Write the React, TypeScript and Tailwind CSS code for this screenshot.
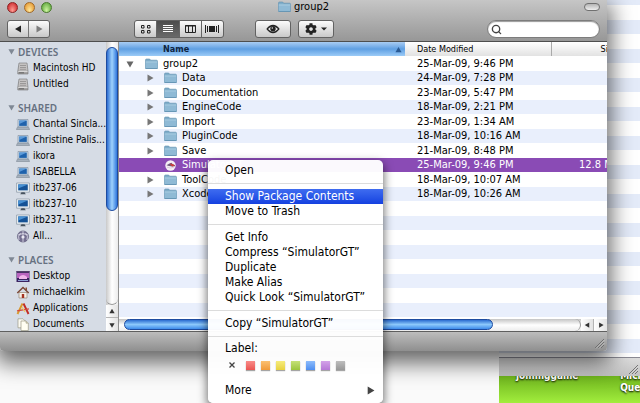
import React from 'react';
import { Search } from 'lucide-react';
import { FaCog } from 'react-icons/fa';

interface FileEntry {
  name: string;
  modified: string;
  size?: string;
  kind: 'root' | 'folder' | 'app';
}

const files: FileEntry[] = [
  { name: 'group2', modified: '25-Mar-09, 9:46 PM', kind: 'root' },
  { name: 'Data', modified: '24-Mar-09, 7:28 PM', kind: 'folder' },
  { name: 'Documentation', modified: '23-Mar-09, 5:47 PM', kind: 'folder' },
  { name: 'EngineCode', modified: '18-Mar-09, 2:21 PM', kind: 'folder' },
  { name: 'Import', modified: '23-Mar-09, 1:34 AM', kind: 'folder' },
  { name: 'PluginCode', modified: '18-Mar-09, 10:16 AM', kind: 'folder' },
  { name: 'Save', modified: '21-Mar-09, 8:48 PM', kind: 'folder' },
  { name: 'SimulatorGT', modified: '25-Mar-09, 9:46 PM', size: '12.8 MB', kind: 'app' },
  { name: 'ToolCode', modified: '18-Mar-09, 10:07 AM', kind: 'folder' },
  { name: 'XcodeProject', modified: '18-Mar-09, 10:26 AM', kind: 'folder' },
];

const emptyRows = [0, 1, 2, 3, 4, 5, 6, 7];

const sections = [
  {
    title: 'DEVICES',
    items: [
      { label: 'Macintosh HD', icon: 'disk' },
      { label: 'Untitled', icon: 'disk' },
    ],
  },
  {
    title: 'SHARED',
    items: [
      { label: 'Chantal Sincla...', icon: 'laptop' },
      { label: 'Christine Palis...', icon: 'laptop' },
      { label: 'ikora', icon: 'laptop' },
      { label: 'ISABELLA', icon: 'laptop' },
      { label: 'itb237-06', icon: 'display' },
      { label: 'itb237-10', icon: 'display' },
      { label: 'itb237-11', icon: 'display' },
      { label: 'All...', icon: 'globe' },
    ],
  },
  {
    title: 'PLACES',
    items: [
      { label: 'Desktop', icon: 'desktop' },
      { label: 'michaelkim', icon: 'home' },
      { label: 'Applications', icon: 'apps' },
      { label: 'Documents', icon: 'docs' },
    ],
  },
];

const menuGroups = [
  ['Open'],
  ['Show Package Contents', 'Move to Trash'],
  ['Get Info', 'Compress “SimulatorGT”', 'Duplicate', 'Make Alias', 'Quick Look “SimulatorGT”'],
  ['Copy “SimulatorGT”'],
];

const labelColors = [
  { name: 'Red', style: 'from-[#f98b88] to-[#ea5552]' },
  { name: 'Orange', style: 'from-[#fbc070] to-[#f09a38]' },
  { name: 'Yellow', style: 'from-[#f6ec7c] to-[#e8d23c]' },
  { name: 'Green', style: 'from-[#c5e176] to-[#9cc53c]' },
  { name: 'Blue', style: 'from-[#8dbcfc] to-[#4f8ff0]' },
  { name: 'Purple', style: 'from-[#d3a2e8] to-[#b678d6]' },
  { name: 'Gray', style: 'from-[#bebebe] to-[#989898]' },
];

const Folder = () => (
  <svg viewBox="0 0 13 12" className="h-3 w-[13px] shrink-0" aria-hidden="true">
    <path d="M.5 10.5V2q0-1 1-1h3.200l1 1.200h5.800q1 0 1 1v7.300z" fill="#7fadc9" stroke="#5f90b0" strokeWidth=".6" />
    <path d="M.8 3.500h11.400v7.100H.8z" fill="#8fbad5" />
    <path d="M.8 3.500h11.400v1H.8z" fill="#a9cce0" />
    <path d="M.8 10h11.400v.8H.8z" fill="#5f90b0" />
  </svg>
);

const Triangle = ({ dir, className }: { dir: 'up' | 'down' | 'left' | 'right'; className: string }) => {
  const paths = {
    up: 'M4 1l3.5 6h-7z',
    down: 'M4 7.5L.5 1.5h7z',
    left: 'M1 4l6-3.5v7z',
    right: 'M7.5 4L1.5.5v7z',
  };
  return (
    <svg viewBox="0 0 8 8" className={`shrink-0 ${className}`} fill="currentColor" aria-hidden="true">
      <path d={paths[dir]} />
    </svg>
  );
};

const AppIcon = () => (
  <svg viewBox="0 0 13 13" className="h-[13px] w-[13px] shrink-0" aria-hidden="true">
    <circle cx="6.5" cy="6.5" r="5.2" fill="#f4eef4" />
    <path d="M2.500 6.200l3-1.700 2-.8 1 1.400 2.500 1.200v1L8 7.400 5 7z" fill="#6f5a7c" />
    <path d="M5.800 4.600l3 .6 2.200 1-2.400 1.400-1.600-1z" fill="#d23c38" />
    <path d="M3 8.200q3.500 1.600 7 0" stroke="#d8c4d6" fill="none" strokeWidth=".8" />
  </svg>
);

const SidebarIcon = ({ icon }: { icon: string }) => (
  <svg viewBox="0 0 14 13" className="h-[13px] w-[14px] shrink-0" aria-hidden="true">
    {icon === 'disk' && (
      <>
        <path d="M3 1h8l1 8v3H1.800V9z" fill="#a5a4a4" stroke="#777" strokeWidth=".6" />
        <path d="M3.400 1.500h7.200l.8 7H2.600z" fill="#c5c3c3" />
        <path d="M4 3.500h6M4 5.500h6M3.800 7.300h6.400" stroke="#8f8d8d" strokeWidth=".8" />
        <path d="M2.200 9.500h9.400" stroke="#eee" strokeWidth=".7" />
        <path d="M3 10.800h5" stroke="#555" strokeWidth=".8" />
      </>
    )}
    {icon === 'laptop' && (
      <>
        <path d="M2 1.500h10V9H2z" fill="#c9dbeb" stroke="#7c8a99" strokeWidth=".6" />
        <path d="M3.200 2.600h7.600v5.300H3.200z" fill="#1f62ac" />
        <path d="M3.200 2.600h7.600L3.200 6z" fill="#5b9ad8" />
        <path d="M1.400 9.200h11.200l1 2.300H.4z" fill="#a7b2be" stroke="#707c89" strokeWidth=".5" />
      </>
    )}
    {icon === 'display' && (
      <>
        <path d="M.6 1h12.800v9.200H.6z" fill="#eef3f6" stroke="#8794a0" strokeWidth=".7" />
        <path d="M2.200 2.400h9.600v6H2.200z" fill="#155296" />
        <path d="M2.200 2.400h9.600L2.200 6.500z" fill="#4891d3" />
        <path d="M5.500 10.200h3l1.300 2.100H4.200z" fill="#46525e" />
      </>
    )}
    {icon === 'globe' && (
      <>
        <circle cx="7" cy="6.500" r="5.600" fill="#746f90" stroke="#605c7b" strokeWidth=".6" />
        <path d="M3 10q-1.500-4 1.500-7M7 12V1M11 10q1.500-4-1.500-7M2 5q5-3 10 0" stroke="#d9d8e6" strokeWidth=".9" fill="none" />
        <circle cx="7" cy="7" r="1.600" fill="#e9e8f2" />
      </>
    )}
    {icon === 'desktop' && (
      <>
        <path d="M.5 1h13v11H.5z" fill="#3c2460" />
        <path d="M1 3h12v5H1z" fill="#b964bf" />
        <path d="M3 7q4-4 8 0v2H3z" fill="#efb6ea" />
        <path d="M.5 1h13v1.500H.5z" fill="#55406c" />
        <path d="M2 10.500h10" stroke="#8ea0d5" />
      </>
    )}
    {icon === 'home' && (
      <>
        <path d="M3 6.500h8V12H3z" fill="#f6f1e8" stroke="#8a7563" strokeWidth=".6" />
        <path d="M9.500 1.500h1.500v3H9.500z" fill="#8c4f35" />
        <path d="M1.300 7L7 1.500 12.700 7" stroke="#7b4633" strokeWidth="1.400" fill="none" />
        <path d="M5.800 8h2.400v4H5.800z" fill="#a33322" />
      </>
    )}
    {icon === 'apps' && (
      <>
        <path d="M1.500 12L6.500 1.500" stroke="#d99a2e" strokeWidth="1.900" />
        <path d="M7.500 1.500l5 10.500" stroke="#c22c24" strokeWidth="1.900" />
        <path d="M1 8.800l12-2" stroke="#d5483a" strokeWidth="1.300" />
        <path d="M6 5l3 5" stroke="#f0cc62" strokeWidth="1.200" />
      </>
    )}
    {icon === 'docs' && (
      <>
        <path d="M2 .8h5l2 2v7H2z" fill="#fbfaf2" stroke="#8f8b74" strokeWidth=".6" />
        <path d="M5 3h5l2.300 2.200v7.300H5z" fill="#fffef2" stroke="#8f8b74" strokeWidth=".6" />
        <path d="M10 3v2.200h2.300" fill="#d9d5b8" stroke="#8f8b74" strokeWidth=".5" />
      </>
    )}
  </svg>
);

const Grip = () => (
  <svg viewBox="0 0 12 12" className="h-3 w-3" aria-hidden="true">
    <path d="M1 10L10 1M4 10l6-6M7 10l3-3" stroke="#6a6a6a" strokeWidth=".9" />
    <path d="M2 10.500L10.500 2M5 10.500L10.500 5" stroke="#ddd" strokeWidth=".5" />
  </svg>
);

const toolButton =
  'flex items-center justify-center bg-linear-to-b from-[#fbfbfb] to-[#c9c9c9] text-[#222]';

const Toolbar = () => (
  <header className="h-[42px] shrink-0 border-b border-[#4e4e4e] bg-linear-to-b from-[#c6c6c6] to-[#979797] px-[7px]">
    <div className="grid h-[20px] grid-cols-[1fr_auto_1fr] items-start pt-px">
      <div className="flex gap-[6px] pt-px">
        <button aria-label="Close" className="h-[11px] w-[11px] rounded-full border border-[#8c2424] bg-radial-[at_50%_80%] from-[#ff9d94] to-[#c4161c]" />
        <button aria-label="Minimize" className="h-[11px] w-[11px] rounded-full border border-[#a0692a] bg-radial-[at_50%_80%] from-[#ffe89a] to-[#e08a20]" />
        <button aria-label="Zoom" className="h-[11px] w-[11px] rounded-full border border-[#4a7a2e] bg-radial-[at_50%_80%] from-[#cdf5a0] to-[#4c9a2c]" />
      </div>
      <h1 className="flex h-3 items-center gap-[3px] text-[11px] leading-3 text-black">
        <Folder />
        group2
      </h1>
      <button aria-label="Toggle toolbar" className="mt-[2px] h-2 w-4 justify-self-end rounded-full border border-[#707070] bg-linear-to-b from-[#b5b5b5] to-[#eeeeee]" />
    </div>
    <div className="flex items-center">
      <div className="flex h-[18px] w-[43px] gap-px overflow-hidden rounded-[3px] border border-[#626262] bg-[#777]">
        <button aria-label="Back" className={`flex-1 ${toolButton}`}>
          <Triangle dir="left" className="h-2 w-2" />
        </button>
        <button aria-label="Forward" className={`flex-1 ${toolButton}`}>
          <Triangle dir="right" className="h-2 w-2 text-[#7d7d7d]" />
        </button>
      </div>
      <div className="ml-[84px] flex h-[18px] w-[90px] gap-px overflow-hidden rounded-[3px] border border-[#626262] bg-[#666]">
        <button aria-label="Icon view" className={`flex-1 ${toolButton}`}>
          <svg viewBox="0 0 10 9" className="h-[9px] w-[10px]" fill="none" stroke="currentColor" strokeWidth="1">
            <path d="M.5.5h2.500v2.500h-2.500zM6.500.5h2.500v2.500h-2.500zM.5 5.500h2.500v2.500h-2.500zM6.500 5.500h2.500v2.500h-2.500z" />
          </svg>
        </button>
        <button aria-label="List view" aria-pressed="true" className="flex flex-1 items-center justify-center bg-linear-to-b from-[#4d4d4d] to-[#696969] text-white">
          <svg viewBox="0 0 10 8" className="h-2 w-[10px]" stroke="currentColor" strokeWidth="1">
            <path d="M0 .5h10M0 2.500h10M0 4.500h10M0 6.500h10" />
          </svg>
        </button>
        <button aria-label="Column view" className={`flex-1 ${toolButton}`}>
          <svg viewBox="0 0 11 8" className="h-2 w-[11px]" fill="none" stroke="currentColor" strokeWidth="1">
            <path d="M.5.5h10v7H.5zM3.500 0v8M7.500 0v8M0 1h11" />
          </svg>
        </button>
        <button aria-label="Cover Flow view" className={`flex-1 ${toolButton}`}>
          <svg viewBox="0 0 14 8" className="h-2 w-[14px]" fill="currentColor">
            <path d="M0 0h1v8H0zM2 1h1v6H2zM4 1h6v6H4zM11 1h1v6h-1zM13 0h1v8h-1z" />
          </svg>
        </button>
      </div>
      <button aria-label="Quick Look" className={`ml-[31px] h-[18px] w-9 rounded-[3px] border border-[#626262] ${toolButton}`}>
        <svg viewBox="0 0 14 10" className="h-[10px] w-[14px]">
          <path d="M.3 5Q3.500.8 7 .8T13.700 5Q10.500 9.200 7 9.200T.3 5z" fill="#222" />
          <path d="M2 5Q4.500 2.200 7 2.200T12 5Q9.500 7.800 7 7.800T2 5z" fill="#e4e4e4" />
          <circle cx="7" cy="4.800" r="2.700" fill="#222" />
          <circle cx="6.300" cy="4" r=".8" fill="#e4e4e4" />
        </svg>
      </button>
      <button aria-label="Action" className={`ml-[7px] h-[18px] w-9 gap-1 rounded-[3px] border border-[#626262] ${toolButton}`}>
        <FaCog className="h-3 w-3" />
        <svg viewBox="0 0 6 4" className="h-1 w-[6px]" fill="currentColor">
          <path d="M0 .5h6l-3 3z" />
        </svg>
      </button>
      <label className="ml-auto flex h-[18px] w-[113px] items-center rounded-full border border-[#7c7c7c] bg-white pl-[3px] shadow-[inset_0_1px_1px_#999]">
        <Search className="h-[11px] w-[11px] shrink-0 text-[#444]" strokeWidth={3} />
        <input type="search" aria-label="Search" className="w-full min-w-0 bg-transparent px-1 text-[10px] outline-none" />
      </label>
    </div>
  </header>
);

const Sidebar = () => (
  <nav className="flex min-h-0 w-[106px] shrink-0 flex-col gap-[7px] overflow-hidden bg-[#d6dce5] pt-px text-[10px]">
    {sections.map((section) => (
      <section key={section.title}>
        <h2 className="flex h-[17px] items-center gap-[3px] pl-2 font-['Noto_Sans',sans-serif] text-[10px] leading-4 font-semibold text-[#667181]">
          <Triangle dir="down" className="h-[7px] w-[7px] text-[#7f8894]" />
          {section.title}
        </h2>
        <ul>
          {section.items.map((item) => (
            <li key={item.label}>
              <a href="#" className="flex h-4 items-center gap-[3px] pl-4 leading-4 whitespace-nowrap text-black">
                <SidebarIcon icon={item.icon} />
                {item.label}
              </a>
            </li>
          ))}
        </ul>
      </section>
    ))}
  </nav>
);

const arrowButton =
  'flex h-[13px] w-[13px] shrink-0 items-center justify-center border-[#b5b5b5] bg-linear-to-r from-white to-[#e3e3e3] text-[#333]';

const VerticalScrollbar = () => (
  <div className="flex w-[13px] shrink-0 flex-col border-r border-[#8f8f8f] bg-linear-to-r from-[#c9c9c9] via-white to-[#ececec]">
    <div className="flex flex-1 flex-col rounded-b-full border-b border-[#999] pt-[5px]">
      <div className="h-[64%] rounded-full border border-[#1d4ba0] bg-linear-to-r from-[#2c6cd0] via-[#9fd2fc] to-[#2f77dc]" />
    </div>
    <button aria-label="Scroll up" className={`${arrowButton} w-full border-b`}>
      <Triangle dir="up" className="h-[6px] w-[6px]" />
    </button>
    <button aria-label="Scroll down" className={`${arrowButton} w-full`}>
      <Triangle dir="down" className="h-[6px] w-[6px]" />
    </button>
  </div>
);

const HorizontalScrollbar = () => (
  <div className="flex h-3 shrink-0 bg-linear-to-b from-[#c4c4c4] via-white to-[#ececec]">
    <div className="flex flex-1 rounded-r-full border-r border-[#999] pl-[5px]">
      <div className="h-[11px] w-[81%] rounded-full border border-[#1d4ba0] bg-linear-to-b from-[#2c6cd0] via-[#8cc8fb] to-[#3d8bea]" />
    </div>
    <button aria-label="Scroll left" className={`${arrowButton} h-full border-r`}>
      <Triangle dir="left" className="h-[6px] w-[6px]" />
    </button>
    <button aria-label="Scroll right" className={`${arrowButton} h-full`}>
      <Triangle dir="right" className="h-[6px] w-[6px]" />
    </button>
  </div>
);

const FileList = () => (
  <div className="min-h-0 flex-1 overflow-hidden bg-white">
    <table className="w-full table-fixed border-collapse text-left text-[11px] leading-[14px] whitespace-nowrap">
      <thead>
        <tr className="h-[14px]">
          <th className="bg-linear-to-b from-[#a9cdf3] via-[#5f9fe2] to-[#9bcbf7] p-0 font-normal">
            <div className="flex items-center justify-between pr-[3px] pl-11">
              <span className="text-[9px] leading-[14px] font-bold text-[#10243e]">Name</span>
              <Triangle dir="up" className="h-[7px] w-[7px] text-[#2a5a94]" />
            </div>
          </th>
          <th className="w-[146px] border-r border-[#aaa] bg-linear-to-b from-white to-[#e2e2e2] p-0 pl-3 text-[9px] font-normal">
            Date Modified
          </th>
          <th className="w-14 overflow-hidden bg-linear-to-b from-white to-[#e2e2e2] p-0 text-[9px] font-normal">
            <div className="pl-[49px]">Size</div>
          </th>
        </tr>
      </thead>
      <tbody>
        {files.map((file) => (
          <tr
            key={file.name}
            aria-selected={file.kind === 'app'}
            className="odd:h-[15px] even:h-[14px] even:bg-[#e9effc] aria-selected:bg-[#8a4bb5] aria-selected:text-white"
          >
            <td className="p-0">
              <div className={`flex h-[14px] items-center ${file.kind === 'root' ? 'pl-[7px]' : 'pl-[27px]'}`}>
                {file.kind === 'root' && <Triangle dir="down" className="mr-[11px] h-2 w-2 text-[#666]" />}
                {file.kind === 'folder' && <Triangle dir="right" className="mr-[10px] h-2 w-2 text-[#777]" />}
                {file.kind === 'app' ? (
                  <span className="pl-[18px]">
                    <AppIcon />
                  </span>
                ) : (
                  <Folder />
                )}
                <span className="pl-[5px]">{file.name}</span>
              </div>
            </td>
            <td className="p-0 pl-3">{file.modified}</td>
            <td className="overflow-hidden p-0 pl-7">{file.size}</td>
          </tr>
        ))}
        {emptyRows.map((row) => (
          <tr key={row} className="odd:h-[15px] even:h-[14px] even:bg-[#e9effc]">
            <td className="p-0" colSpan={3} />
          </tr>
        ))}
      </tbody>
    </table>
  </div>
);

const FinderWindow = () => (
  <main className="absolute top-0 right-[33px] bottom-[52px] left-0 flex flex-col overflow-hidden rounded-b-[4px] shadow-[0_8px_22px_4px_rgba(0,0,0,0.6)]">
    <Toolbar />
    <div className="flex min-h-0 flex-1">
      <Sidebar />
      <VerticalScrollbar />
      <div className="flex min-w-0 flex-1 flex-col">
        <FileList />
        <HorizontalScrollbar />
      </div>
    </div>
    <footer className="flex h-5 shrink-0 items-end justify-end border-t border-[#5f5f5f] bg-linear-to-b from-[#bdbdbd] to-[#8f8f8f] p-px">
      <Grip />
    </footer>
  </main>
);

const ContextMenu = () => (
  <div
    role="menu"
    className="absolute top-[160px] left-[208px] w-[175px] rounded-[5px] bg-white/97 pt-[3px] pb-[5px] text-[12px] leading-[15px] text-black shadow-[0_4px_10px_1px_rgba(0,0,0,0.55)]"
  >
    {menuGroups.map((group) => (
      <div key={group[0]} className="border-b border-[#dcdcdc] pb-[5px] not-first:pt-[5px]">
        {group.map((item) => (
          <button
            key={item}
            role="menuitem"
            className={`block h-[15px] w-full pl-[17px] text-left whitespace-nowrap ${
              item === 'Show Package Contents' ? 'bg-linear-to-b from-[#3f6cf0] to-[#1540e0] text-white' : ''
            }`}
          >
            {item}
          </button>
        ))}
      </div>
    ))}
    <div className="pt-1 pl-[17px]">Label:</div>
    <div className="flex h-[18px] items-center gap-[6px] pl-5">
      <button aria-label="No label" className="mr-1 h-2 w-2 text-[#444]">
        <svg viewBox="0 0 8 8" className="h-2 w-2" stroke="currentColor" strokeWidth="1.300">
          <path d="M1.500 1.500l5 5M6.500 1.500l-5 5" />
        </svg>
      </button>
      {labelColors.map((color) => (
        <button
          key={color.name}
          aria-label={color.name}
          className={`h-[9px] w-[9px] bg-linear-to-b shadow-[0_1px_1px_rgba(0,0,0,0.35)] ${color.style}`}
        />
      ))}
    </div>
    <button role="menuitem" className="mt-[9px] flex h-[15px] w-full items-center justify-between pr-2 pl-[17px]">
      More
      <Triangle dir="right" className="h-[9px] w-[9px] text-[#444]" />
    </button>
  </div>
);

const Desktop = () => (
  <>
    <div className="absolute right-0 bottom-0 left-[499px] h-[27px] overflow-hidden bg-linear-to-b from-[#6fb51d] to-[#a2ee3d] text-[10px] leading-3 font-bold text-white [text-shadow:0_1px_2px_#000]">
      <div className="flex items-start justify-between pl-[17px]">
        <span className="-mt-[6px]">jommggame</span>
        <span className="-mt-[6px] -mr-[10px] whitespace-nowrap">
          Micha
          <br />
          Quest
        </span>
      </div>
    </div>
    <div className="absolute top-0 right-0 bottom-[27px] left-[499px] flex flex-col">
      <div className="flex-1 bg-[repeating-linear-gradient(to_bottom,#e4ebf9_0px,#e4ebf9_5px,#ffffff_5px,#ffffff_20px,#e4ebf9_20px,#e4ebf9_29px)]" />
      <div className="flex h-[19px] items-end justify-end border-t border-[#8a8a94] bg-linear-to-b from-[#dcdcdc] to-[#c2c2c2]">
        <Grip />
      </div>
    </div>
    <div className="absolute top-0 bottom-0 left-0 w-[499px] bg-[#fafafa]" />
  </>
);

export default function App() {
  return (
    <div className="relative h-screen overflow-hidden bg-[#fafafa] font-['DejaVu_Sans_Condensed','DejaVu_Sans',sans-serif]">
      <Desktop />
      <FinderWindow />
      <ContextMenu />
    </div>
  );
}
